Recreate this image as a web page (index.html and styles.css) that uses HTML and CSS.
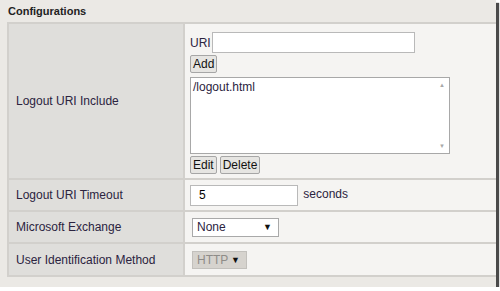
FILE: index.html
```html
<!DOCTYPE html>
<html lang="en">
<head>
  <meta charset="UTF-8">
  <title>Configurations</title>
  <link rel="stylesheet" href="styles.css">
</head>
<body>
  <div class="frame">
    <h2 class="section-title">Configurations</h2>
    <table class="config-table">
      <tr class="row-include">
        <td class="label">Logout URI Include</td>
        <td class="value">
          <div class="uri-line">
            <span class="uri-label">URI</span>
            <input type="text" class="uri-input">
          </div>
          <div class="btn-row">
            <button class="btn">Add</button>
          </div>
          <div class="uri-list">
            <span class="uri-item">/logout.html</span>
            <div class="scroll">
              <span class="arrow">&#9650;</span>
              <span class="arrow">&#9660;</span>
            </div>
          </div>
          <div class="btn-row">
            <button class="btn">Edit</button>
            <button class="btn">Delete</button>
          </div>
        </td>
      </tr>
      <tr>
        <td class="label">Logout URI Timeout</td>
        <td class="value">
          <input type="text" class="timeout-input" value="5">
          <span class="unit">seconds</span>
        </td>
      </tr>
      <tr>
        <td class="label">Microsoft Exchange</td>
        <td class="value">
          <div class="select select-none">None <span class="caret">&#9660;</span></div>
        </td>
      </tr>
      <tr class="row-last">
        <td class="label">User Identification Method</td>
        <td class="value">
          <div class="select select-disabled">HTTP <span class="caret">&#9660;</span></div>
        </td>
      </tr>
    </table>
  </div>
</body>
</html>
```

FILE: styles.css
```css
/* Page and the screenshot frame with its drop shadow */
body {
  margin: 0;
  background: #ffffff;
  font-family: "Liberation Sans", Arial, sans-serif;
  font-size: 12px;
  color: #2b2340;
}
.frame {
  width: 496px;
  height: 287px;
  background: #ebe9e5;
  box-shadow: 3px 3px 1px #4a4a4a;
  overflow: hidden;
}
.section-title {
  margin: 0;
  padding: 5px 0 0 8px;
  height: 17px;
  font-size: 11px;
  font-weight: bold;
  color: #222;
}
/* Settings table */
.config-table {
  margin-left: 7px;
  width: 500px;
  border-collapse: collapse;
  border: 2px solid #b4b2ae;
}
.config-table td {
  border: 2px solid #d2d0cc;
  padding: 0;
}
.label {
  width: 167px;
  padding-left: 7px !important;
  background: #dfdedb;
}
.value {
  background: #f5f4f2;
  padding-left: 5px !important;
  height: 30px;
}
.row-include .value {
  height: 146px;
  padding-top: 8px !important;
  vertical-align: top;
}
.row-last .value {
  height: 31px;
}
/* Form controls */
input {
  font-family: inherit;
  font-size: 12px;
  box-sizing: border-box;
  border: 1px solid #b9b9b9;
  background: #fff;
  margin: 0;
}
.uri-line {
  display: flex;
  align-items: center;
  gap: 1px;
}
.uri-input {
  width: 203px;
  height: 21px;
}
.btn {
  font-family: inherit;
  font-size: 12px;
  color: #111;
  background: #e6e5e2;
  border: 1px solid #a6a6a6;
  border-radius: 2px;
  padding: 0 2px;
  height: 18px;
  margin: 0;
}
.btn-row {
  display: flex;
  gap: 3px;
  margin-top: 2px;
}
.uri-list {
  display: flex;
  justify-content: space-between;
  width: 260px;
  height: 77px;
  box-sizing: border-box;
  margin-top: 4px;
  border: 1px solid #a8a8a8;
  background: #fff;
}
.uri-item {
  padding: 2px 0 0 2px;
}
.scroll {
  display: flex;
  flex-direction: column;
  justify-content: space-between;
  width: 14px;
  padding: 4px 0;
  align-items: center;
}
.arrow {
  font-size: 6px;
  color: #a8a8a8;
}
.timeout-input {
  width: 108px;
  height: 21px;
  padding-left: 8px;
  vertical-align: middle;
}
.unit {
  margin-left: 2px;
}
.select {
  display: inline-flex;
  align-items: center;
  justify-content: space-between;
  box-sizing: border-box;
  height: 19px;
  margin-left: 2px;
  padding: 0 6px 0 4px;
  border: 1px solid #a9a9a9;
}
.select-none {
  width: 87px;
  background: #fff;
}
.select-disabled {
  width: 55px;
  background: #d6d3ce;
  color: #8e8c88;
  border-color: #c2c0bc;
  height: 18px;
}
.caret {
  font-size: 9px;
  color: #111;
}
```
